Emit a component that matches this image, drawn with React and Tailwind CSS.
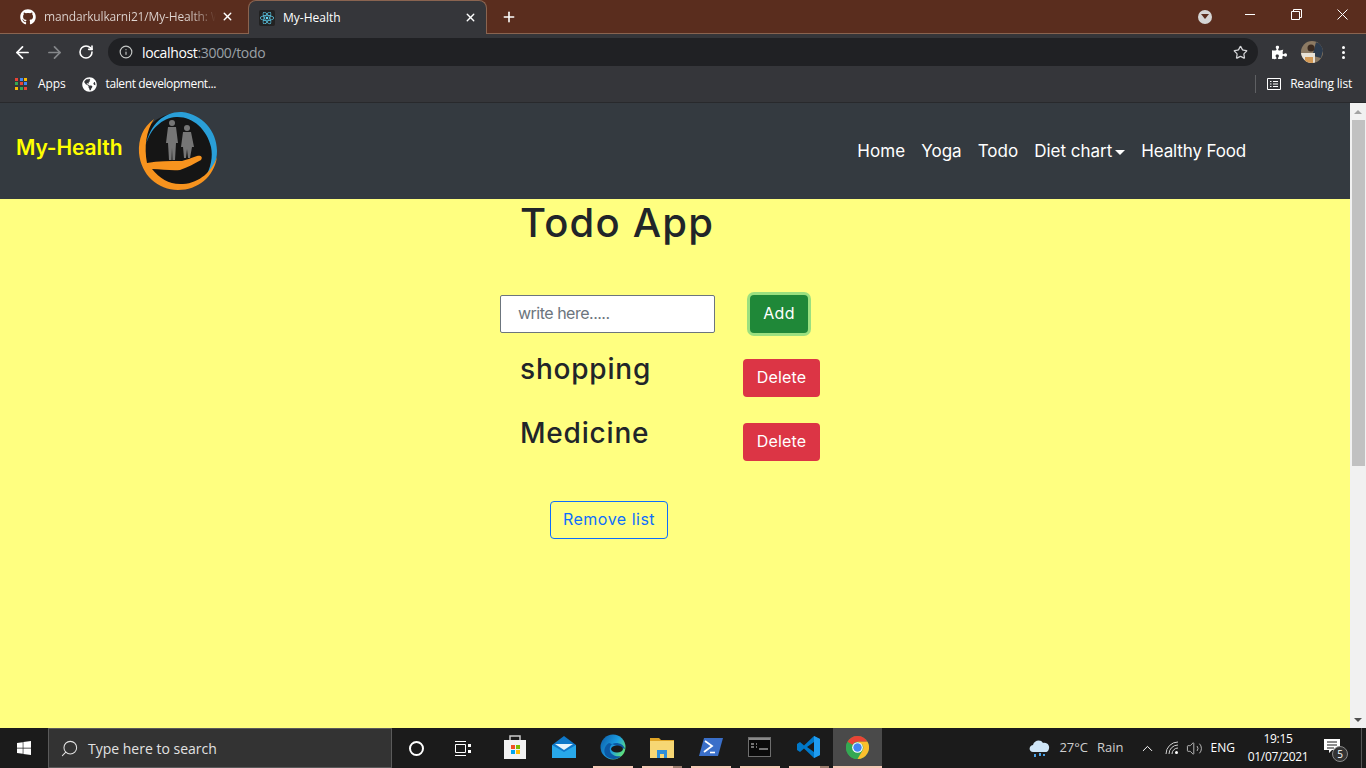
import { FaGithub, FaReact, FaWindows, FaPuzzlePiece, FaGlobeAmericas } from 'react-icons/fa'
import { ArrowLeft, ArrowRight, RotateCw, Info, Star, X, Plus, Search, ChevronUp, Volume2 } from 'lucide-react'

const uiFont = "font-['Open_Sans',sans-serif]"
const pageFont = "font-['Inter',sans-serif]"

const AppsGrid = () => {
  const colors = ['#ea4335', '#4285f4', '#fbbc05', '#34a853', '#ea4335', '#4285f4', '#fbbc05', '#34a853', '#ea4335']
  return (
    <div className="grid grid-cols-3 gap-[1px] w-[13px] h-[13px]">
      {colors.map((c, i) => (
        <div key={i} className="w-[3px] h-[3px]" style={{ backgroundColor: c }} />
      ))}
    </div>
  )
}

const Logo = () => (
  <svg width="80" height="80" viewBox="0 0 80 80" className="shrink-0">
    <circle cx="40" cy="40" r="38" fill="#151515" />
    {/* blue arc */}
    <path d="M8 34 C12 12 28 0 44 1 C64 3 79 20 79 40 C79 50 75 60 67 67 C73 56 75 46 73 36 C69 18 54 5 38 6 C24 7 12 18 8 34Z" fill="#2a9fd8" />
    {/* orange ring and hand */}
    <path d="M16 8 C5 16 0 28 1 42 C3 64 20 79 40 79 C60 79 76 66 79 46 C74 60 62 72 45 73 C32 74 22 68 14 58 C24 58 34 60 42 59 C50 56 56 53 63 49 C65 46 63 44 59 45 C53 47 48 49 44 50 C32 50 20 50 9 52 C6 36 8 20 16 8Z" fill="#f7931e" />
    <g fill="#767676">
      <circle cx="34" cy="12" r="3" />
      <path d="M30 16 h8 l2 16 h-2 l-1 17 h-2.5 l-.5 -12 l-.5 12 h-2.5 l-1 -17 h-2z" />
      <circle cx="49" cy="17" r="3" />
      <path d="M45 21 h8 l3 15 h-2 l-2 11 h-2 l-1 -9 l-1 9 h-2 l-1 -11 h-2z" />
    </g>
  </svg>
)

const StoreIcon = () => (
  <svg width="24" height="26" viewBox="0 0 24 26">
    <path d="M7 6 V2 h10 v4" fill="none" stroke="#ccc" strokeWidth="1.5" />
    <rect x="1" y="6" width="22" height="19" fill="#f2f2f2" />
    <rect x="8" y="11" width="4" height="4" fill="#f25022" />
    <rect x="13" y="11" width="4" height="4" fill="#7fba00" />
    <rect x="8" y="16" width="4" height="4" fill="#00a4ef" />
    <rect x="13" y="16" width="4" height="4" fill="#ffb900" />
  </svg>
)

const MailIcon = () => (
  <svg width="26" height="24" viewBox="0 0 26 24">
    <path d="M1 10 L13 1 L25 10 V23 H1Z" fill="#0f78c9" />
    <path d="M4 9 H22 L13 15Z" fill="#e8f4fc" />
    <path d="M1 10 L13 17 L25 10 V23 H1Z" fill="#28a8ea" />
  </svg>
)

const EdgeIcon = () => (
  <svg width="26" height="26" viewBox="0 0 26 26">
    <defs>
      <linearGradient id="edgeG" x1="0" y1="0" x2="1" y2="0.6">
        <stop offset="0" stopColor="#0c59a4" />
        <stop offset="0.6" stopColor="#1b9de2" />
        <stop offset="1" stopColor="#5fe07c" />
      </linearGradient>
    </defs>
    <circle cx="13" cy="13" r="12.5" fill="url(#edgeG)" />
    <path d="M25 15 C24 11 20 9 16 9 C11 9 9 13 10 17 C11 21 16 23 21 22 C18 26 10 26 6 22 C3 18 4 12 9 9" fill="#0c59a4" />
    <ellipse cx="17" cy="15" rx="6" ry="3.5" fill="#1a1a1a" />
  </svg>
)

const FolderIcon = () => (
  <svg width="24" height="22" viewBox="0 0 24 22">
    <path d="M0 2 H9 L11 4 H24 V22 H0Z" fill="#e0a526" />
    <rect x="0" y="5" width="24" height="17" fill="#f7d774" />
    <path d="M7 14 H17 V22 H14 V18 H10 V22 H7Z" fill="#2f8fd8" />
  </svg>
)

const PowerShellIcon = () => (
  <svg width="24" height="20" viewBox="0 0 24 20">
    <path d="M5 1 H24 L19 19 H0Z" fill="#3a6fc9" />
    <path d="M6 4 L13 9 L5 15" fill="none" stroke="#fff" strokeWidth="1.8" />
    <path d="M11 15.5 H16" stroke="#fff" strokeWidth="1.6" />
  </svg>
)

const CmdIcon = () => (
  <svg width="23" height="20" viewBox="0 0 23 20">
    <rect x="0.5" y="0.5" width="22" height="19" fill="#0a0a0a" stroke="#6e6e6e" />
    <rect x="1" y="1" width="21" height="2" fill="#8a8a8a" />
    <path d="M3 7 H6 M3 10 H6 M8 7 H9 M8 10 H9" stroke="#ddd" strokeWidth="1.2" />
    <path d="M11 12 H20" stroke="#ddd" strokeWidth="1" />
  </svg>
)

const VsCodeIcon = () => (
  <svg width="24" height="24" viewBox="0 0 24 24">
    <path d="M17 1 L23 4 V20 L17 23 L7 13.5 L3 17 L0 15 V9 L3 7 L7 10.5Z" fill="#0078c8" />
    <path d="M17 1 L23 4 V20 L17 23Z" fill="#1f9cf0" />
    <path d="M17 7 L10 12 L17 17Z" fill="#1a1a1a" />
  </svg>
)

const ChromeIcon = () => (
  <svg width="23" height="23" viewBox="0 0 24 24">
    <circle cx="12" cy="12" r="12" fill="#34a853" />
    <path d="M12 0 A12 12 0 0 1 22.4 6 L12 6 A6 6 0 0 0 6.8 9 L1.6 6 A12 12 0 0 1 12 0Z" fill="#ea4335" />
    <path d="M1.6 6 L6.8 15 L12 24 A12 12 0 0 1 1.6 6Z" fill="#34a853" />
    <path d="M22.4 6 A12 12 0 0 1 12 24 L17.2 15 A6 6 0 0 0 17.2 9 L12 6Z" fill="#fbc02d" />
    <circle cx="12" cy="12" r="5.6" fill="#fff" />
    <circle cx="12" cy="12" r="4.4" fill="#4285f4" />
  </svg>
)

const Avatar = () => (
  <svg width="22" height="22" viewBox="0 0 22 22" className="ml-[14px] shrink-0">
    <defs>
      <clipPath id="avatarClip">
        <circle cx="11" cy="11" r="11" />
      </clipPath>
    </defs>
    <g clipPath="url(#avatarClip)">
      <rect width="22" height="22" fill="#8c7a63" />
      <rect x="13" y="2" width="9" height="14" fill="#2c3b4d" transform="rotate(15 17 9)" />
      <rect x="0" y="12" width="14" height="10" fill="#e8e2d6" />
      <circle cx="10" cy="7" r="3.5" fill="#3a2a20" />
      <rect x="4" y="16" width="8" height="6" fill="#d49a55" />
    </g>
  </svg>
)

const Tabs = () => (
  <div className={`h-[34px] bg-[#5a2d1e] border-b border-[#8a6450] flex items-center ${uiFont} shrink-0`}>
    <div className="w-[248px] h-full pl-[20px] pr-[9px] flex items-center text-[12px]">
      <FaGithub className="w-[16px] h-[16px] text-white shrink-0" />
      <span className="ml-[8px] w-[172px] whitespace-nowrap tracking-[-0.15px] bg-[linear-gradient(90deg,#e0d7d3_85%,#5a2d1e)] bg-clip-text text-transparent">mandarkulkarni21/My-Health: We</span>
      <X className="w-[13px] h-[13px] text-white ml-[5px] shrink-0" strokeWidth={2.5} />
    </div>
    <div className="w-[239px] h-[34px] -mb-px self-start bg-[#35363a] rounded-t-[8px] border border-b-0 border-[#8a6450] pl-[10px] pr-[9px] flex items-center text-[12px] text-white">
      <div className="w-[16px] h-[16px] bg-[#222] rounded-[2px] flex items-center justify-center shrink-0">
        <FaReact className="w-[14px] h-[14px] text-[#61dafb]" />
      </div>
      <span className="ml-[8px] flex-1">My-Health</span>
      <X className="w-[13px] h-[13px] text-white shrink-0" strokeWidth={2.5} />
    </div>
    <Plus className="w-[16px] h-[16px] text-white ml-[14px]" strokeWidth={2.4} />
    <div className="flex-1" />
    <div className="w-[14px] h-[14px] rounded-full bg-[#d5d5d5] flex items-center justify-center mr-[1px]">
      <div className="w-0 h-0 border-l-[4px] border-r-[4px] border-t-[5px] border-l-transparent border-r-transparent border-t-[#5a2d1e]" />
    </div>
    <div className="w-[10px] h-px bg-white ml-[32px] -mt-[5px]" />
    <svg width="11" height="11" viewBox="0 0 11 11" className="ml-[36px] -mt-[5px]">
      <path d="M0.5 2.5 H8.5 V10.5 H0.5Z M2.5 2.5 V0.5 H10.5 V8.5 H8.5" fill="none" stroke="#fff" />
    </svg>
    <svg width="11" height="11" viewBox="0 0 11 11" className="ml-[35px] mr-[18px] -mt-[5px]">
      <path d="M0.5 0.5 L10.5 10.5 M10.5 0.5 L0.5 10.5" stroke="#fff" />
    </svg>
  </div>
)

const Toolbar = () => (
  <div className={`h-[37px] bg-[#35363a] flex items-center pb-px ${uiFont} shrink-0`}>
    <ArrowLeft className="w-[19px] h-[19px] text-white ml-[13px]" strokeWidth={2.2} />
    <ArrowRight className="w-[19px] h-[19px] text-[#85878a] ml-[13px]" strokeWidth={2.2} />
    <RotateCw className="w-[16px] h-[16px] text-white ml-[14px]" strokeWidth={2.4} />
    <div className="ml-[14px] w-[1150px] h-[28px] rounded-full bg-[#202124] flex items-center pl-[11px] pr-[10px]">
      <Info className="w-[14px] h-[14px] text-[#c4c7c5]" strokeWidth={2} />
      <span className="ml-[9px] text-[14px] text-white tracking-[-0.35px]">localhost</span>
      <span className="text-[14px] text-[#9aa0a6] tracking-[-0.35px]">:3000/todo</span>
      <div className="flex-1" />
      <Star className="w-[15px] h-[15px] text-[#d5d6d8]" strokeWidth={2} />
    </div>
    <FaPuzzlePiece className="w-[15px] h-[15px] text-white ml-[14px]" />
    <Avatar />
    <div className="ml-[19px] flex flex-col gap-[2px]">
      <div className="w-[3px] h-[3px] rounded-full bg-white" />
      <div className="w-[3px] h-[3px] rounded-full bg-white" />
      <div className="w-[3px] h-[3px] rounded-full bg-white" />
    </div>
  </div>
)

const Bookmarks = () => (
  <div className={`h-[32px] bg-[#35363a] border-b border-[#28292c] flex items-center pb-[5px] text-[12px] text-white ${uiFont} shrink-0`}>
    <div className="ml-[15px]">
      <AppsGrid />
    </div>
    <span className="ml-[10px] tracking-[-0.1px]">Apps</span>
    <FaGlobeAmericas className="w-[15px] h-[15px] ml-[16px] text-white" />
    <span className="ml-[9px] tracking-[-0.4px]">talent development...</span>
    <div className="flex-1" />
    <div className="w-px h-[18px] bg-[#5f6063]" />
    <svg width="14" height="14" viewBox="0 0 14 14" className="ml-[11px]">
      <path d="M0.5 1.5 H13.5 V12.5 H0.5Z" fill="none" stroke="#fff" />
      <path d="M3 4.5 H4.5 M6 4.5 H11 M3 7 H4.5 M6 7 H11 M3 9.5 H4.5 M6 9.5 H11" stroke="#fff" />
    </svg>
    <span className="ml-[9px] mr-[14px] tracking-[-0.2px]">Reading list</span>
  </div>
)

const Navbar = () => (
  <nav className={`h-[96px] bg-[#343a40] flex items-center pl-[16px] ${pageFont} shrink-0`}>
    <span className="text-[21px] font-semibold tracking-[-0.1px] text-[#ffff00] mb-[6px]">My-Health</span>
    <div className="ml-[16px]">
      <Logo />
    </div>
    <div className="flex-1" />
    <div className="flex items-center text-white text-[17px] mr-[104px] mt-[2px] gap-[16px]">
      <span className="tracking-[0.1px]">Home</span>
      <span>Yoga</span>
      <span>Todo</span>
      <span className="flex items-center">
        Diet chart
        <span className="ml-[3px] w-0 h-0 border-l-[5px] border-r-[5px] border-t-[5px] border-l-transparent border-r-transparent border-t-white" />
      </span>
      <span className="tracking-[-0.15px]">Healthy Food</span>
    </div>
  </nav>
)

const TodoRow = ({ label, className }) => (
  <div className={`flex ${className}`}>
    <h3 className="w-[243px] pl-[20px] text-[28px] font-medium leading-[34px] text-[#212529] -mt-[7px] tracking-[0.8px]">{label}</h3>
    <button className="w-[77px] h-[38px] pb-[2px] rounded-[4px] bg-[#dc3545] text-white text-[16px] tracking-[0.2px]">Delete</button>
  </div>
)

const Content = () => (
  <main className={`h-full bg-[#ffff80] pl-[500px] ${pageFont}`}>
    <h1 className="pl-[20px] text-[40px] font-medium leading-[48px] text-[#212529] tracking-[1.2px]">Todo App</h1>
    <div className="flex mt-[48px]">
      <input
        readOnly
        placeholder="write here....."
        className="w-[215px] h-[38px] pb-[2px] bg-white border border-[#6c757d] rounded-[2px] pl-[17px] text-[16px] tracking-[-0.5px] placeholder:text-[#6c757d] outline-none"
      />
      <button className="ml-[35px] w-[58px] h-[38px] pb-[2px] rounded-[4px] bg-[#1f8838] ring-[3px] ring-[#9be07f] text-white text-[16px] tracking-[0.3px]">Add</button>
    </div>
    <TodoRow label="shopping" className="mt-[26px]" />
    <TodoRow label="Medicine" className="mt-[26px]" />
    <button className="ml-[50px] mt-[40px] w-[118px] h-[38px] pb-[2px] rounded-[4px] border border-[#0d6efd] text-[#0d6efd] text-[16px] tracking-[0.5px]">Remove list</button>
  </main>
)

const Scrollbar = () => (
  <div className="w-[16px] bg-[#f1f1f1] flex flex-col items-center shrink-0">
    <div className="h-[17px] flex items-center justify-center">
      <div className="w-0 h-0 border-l-[4px] border-r-[4px] border-b-[4px] border-l-transparent border-r-transparent border-b-[#a3a3a3]" />
    </div>
    <div className="w-[13px] h-[346px] bg-[#c1c1c1]" />
    <div className="flex-1" />
    <div className="h-[17px] flex items-center justify-center">
      <div className="w-0 h-0 border-l-[4px] border-r-[4px] border-t-[4px] border-l-transparent border-r-transparent border-t-[#505050]" />
    </div>
  </div>
)

const TaskIcon = ({ children, open, active, stacked }) => (
  <div className={`w-[49px] h-full flex flex-col items-center ${active ? 'bg-[#4a4a4a]' : ''}`}>
    <div className="flex-1 flex items-center justify-center">{children}</div>
    <div className={`h-[2px] flex ${active ? 'w-full' : 'w-[40px]'} ${open ? 'bg-[#f5c9b5]' : ''}`}>
      {stacked && <div className="ml-auto w-[9px] h-full bg-[#a08070]" />}
    </div>
  </div>
)

const Taskbar = () => (
  <div className={`h-[40px] bg-[#1b1b1b] flex items-center text-white ${uiFont} shrink-0`}>
    <div className="w-[48px] flex justify-center">
      <FaWindows className="w-[16px] h-[16px]" />
    </div>
    <div className="w-[344px] h-full bg-[#333333] border border-[#5a5a5a] flex items-center pl-[11px] text-[14px] text-[#e2e2e2]">
      <Search className="w-[19px] h-[19px] -scale-x-100" strokeWidth={1.3} />
      <span className="ml-[9px]">Type here to search</span>
    </div>
    <div className="w-[48px] flex justify-center">
      <div className="w-[15px] h-[15px] rounded-full border-2 border-white" />
    </div>
    <div className="w-[45px] flex justify-center">
      <svg width="18" height="15" viewBox="0 0 18 15">
        <path d="M1 0.5 H12 M1 14.5 H12" stroke="#fff" />
        <path d="M1.5 3.5 H11.5 V11.5 H1.5Z" fill="none" stroke="#fff" />
        <path d="M14 3 h3 v3 h-3z M14 9 h3 v3 h-3z" fill="#fff" />
      </svg>
    </div>
    <div className="h-full flex pl-[5px]">
      <TaskIcon><StoreIcon /></TaskIcon>
      <TaskIcon><MailIcon /></TaskIcon>
      <TaskIcon open><EdgeIcon /></TaskIcon>
      <TaskIcon open stacked><FolderIcon /></TaskIcon>
      <TaskIcon open><PowerShellIcon /></TaskIcon>
      <TaskIcon open><CmdIcon /></TaskIcon>
      <TaskIcon open stacked><VsCodeIcon /></TaskIcon>
      <TaskIcon open active><ChromeIcon /></TaskIcon>
    </div>
    <div className="flex-1" />
    <svg width="23" height="21" viewBox="0 0 23 21">
      <path d="M5 14 C1 14 0 8 5 7 C6 2 13 1 15 5 C20 4 23 9 20 13 C19 14 18 14 17 14Z" fill="#cfe6f7" />
      <path d="M7 16 v3 M12 15 v3 M16 16 v2" stroke="#4aa3e8" strokeWidth="2" />
    </svg>
    <span className="ml-[8px] text-[13px] text-[#cfcfcf] font-medium">27°C</span>
    <span className="ml-[9px] text-[13px] text-[#cfcfcf]">Rain</span>
    <ChevronUp className="w-[17px] h-[17px] ml-[15px]" strokeWidth={1.4} />
    <svg width="14" height="14" viewBox="0 0 14 14" className="ml-[9px]">
      <g fill="none" stroke="#d0d0d0">
        <path d="M1 13 A12 12 0 0 1 13 1" />
        <path d="M4 13 A9 9 0 0 1 13 4" />
        <path d="M7 13 A6 6 0 0 1 13 7" />
      </g>
      <circle cx="11.5" cy="11.5" r="1.5" fill="#fff" />
    </svg>
    <Volume2 className="w-[17px] h-[17px] ml-[7px] text-[#d0d0d0]" strokeWidth={1.2} />
    <span className="ml-[8px] text-[12px]">ENG</span>
    <div className="ml-[13px] flex flex-col items-center text-[12px] leading-[18px] w-[60px] tracking-[-0.3px]">
      <span>19:15</span>
      <span>01/07/2021</span>
    </div>
    <div className="relative ml-[16px] w-[16px] -mt-[3px]">
      <svg width="16" height="15" viewBox="0 0 16 15">
        <path d="M0 0 H16 V11 H8 L5 14 V11 H0Z" fill="#fff" />
        <path d="M3 3 H13 M3 6 H13 M3 9 H10" stroke="#1b1b1b" />
      </svg>
      <div className="absolute -right-[8px] -bottom-[8px] w-[16px] h-[16px] rounded-full bg-[#333] border border-[#8a8a8a] text-[10px] leading-[14px] text-center">5</div>
    </div>
    <div className="ml-[21px] w-px h-full bg-[#555]" />
    <div className="w-[4px]" />
  </div>
)

export default function App() {
  return (
    <div className="h-screen w-full overflow-hidden flex flex-col">
      <Tabs />
      <Toolbar />
      <Bookmarks />
      <div className="flex-1 min-h-0 flex">
        <div className="flex-1 min-w-0 flex flex-col">
          <Navbar />
          <div className="flex-1 min-h-0">
            <Content />
          </div>
        </div>
        <Scrollbar />
      </div>
      <Taskbar />
    </div>
  )
}
